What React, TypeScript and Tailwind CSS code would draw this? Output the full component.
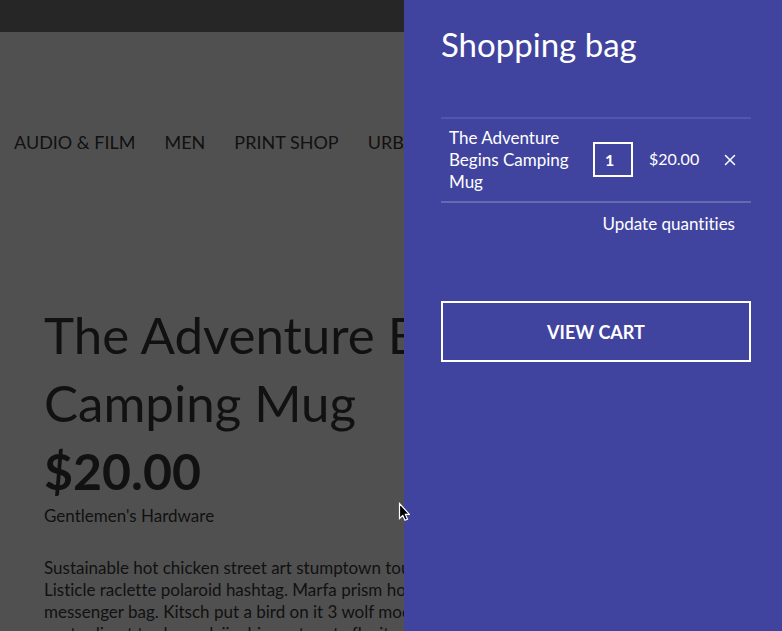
import { X } from 'lucide-react';

type CartItem = {
    id: number;
    name: string;
    quantity: number;
    price: string;
};

const links = ['Audio & Film', 'Men', 'Print Shop', 'Urban'];

const description = [
    'Sustainable hot chicken street art stumptown tousled.',
    'Listicle raclette polaroid hashtag. Marfa prism hoodie',
    'messenger bag. Kitsch put a bird on it 3 wolf moon',
    'cento direct trade cred, jianbing art party flexitarian',
];

const items: CartItem[] = [
    { id: 1, name: 'The Adventure Begins Camping Mug', quantity: 1, price: '$20.00' },
];

function Header() {
    return (
        <header>
            <div className="h-8 bg-[#262626]" />
            <nav className="flex h-[220px] items-center gap-[29px] px-3.5 text-lg uppercase">
                {links.map((link) => (
                    <a key={link} href="#" className="shrink-0 whitespace-nowrap">
                        {link}
                    </a>
                ))}
            </nav>
        </header>
    );
}

function Product() {
    return (
        <main className="px-11 pt-[49px]">
            <h1 className="text-[51px] leading-[68px]">
                <span className="block whitespace-nowrap">The Adventure Begins</span>
                <span className="block whitespace-nowrap">Camping Mug</span>
            </h1>
            <p className="text-[50px] leading-[68px] font-bold">$20.00</p>
            <p className="text-[17px] leading-[22px]">Gentlemen's Hardware</p>
            <p className="pt-[30px] text-[17px] leading-[22px]">
                {description.map((line) => (
                    <span key={line} className="block whitespace-nowrap">
                        {line}
                    </span>
                ))}
            </p>
        </main>
    );
}

function CartRow({ item }: { item: CartItem }) {
    return (
        <tr className="border-t-2 border-b-2 border-t-white/10 border-b-white/20">
            <td className="px-2 py-2">{item.name}</td>
            <td className="w-14 px-2 pb-0.5">
                <input
                    type="text"
                    aria-label={`Quantity of ${item.name}`}
                    defaultValue={item.quantity}
                    className="block h-[35px] w-10 border-2 border-white bg-transparent px-2.5 text-base font-bold outline-none"
                />
            </td>
            <td className="w-17 px-2 pb-0.5 text-base">{item.price}</td>
            <td className="w-[42px] pr-3">
                <button type="button" aria-label="Remove" className="ml-auto block">
                    <X className="size-[18px]" strokeWidth={2} />
                </button>
            </td>
        </tr>
    );
}

function ShoppingBag() {
    return (
        <aside className="fixed inset-y-0 right-0 w-[378px] bg-[#41449f] pt-[22px] pr-[31px] pl-[37px] text-white">
            <h2 className="text-[33px] leading-[44px]">Shopping bag</h2>
            <form className="pt-[51px]">
                <table className="w-full border-collapse text-left text-[17px] leading-[22px]">
                    <tbody>
                        {items.map((item) => (
                            <CartRow key={item.id} item={item} />
                        ))}
                    </tbody>
                </table>
                <div className="flex justify-end px-4 pt-2.5">
                    <button type="button" className="text-[17px] leading-[22px]">
                        Update quantities
                    </button>
                </div>
                <button
                    type="button"
                    className="mt-[66px] h-[61px] w-full border-2 border-white text-lg font-bold uppercase"
                >
                    View cart
                </button>
            </form>
        </aside>
    );
}

function Cursor() {
    return (
        <svg viewBox="0 0 12 19" className="fixed top-[502px] left-[398px] h-[19px] w-3">
            <path
                d="M1.5 1.5v15l3.3-3.1L7 18.2l2.5-1.1L7.4 12.4h4z"
                fill="black"
                stroke="white"
                strokeWidth="1.2"
            />
        </svg>
    );
}

export default function App() {
    return (
        <div className="h-screen overflow-hidden bg-[#505050] font-[Lato,sans-serif] text-[#111111] [font-variant-ligatures:none]">
            <Header />
            <Product />
            <ShoppingBag />
            <Cursor />
        </div>
    );
}
